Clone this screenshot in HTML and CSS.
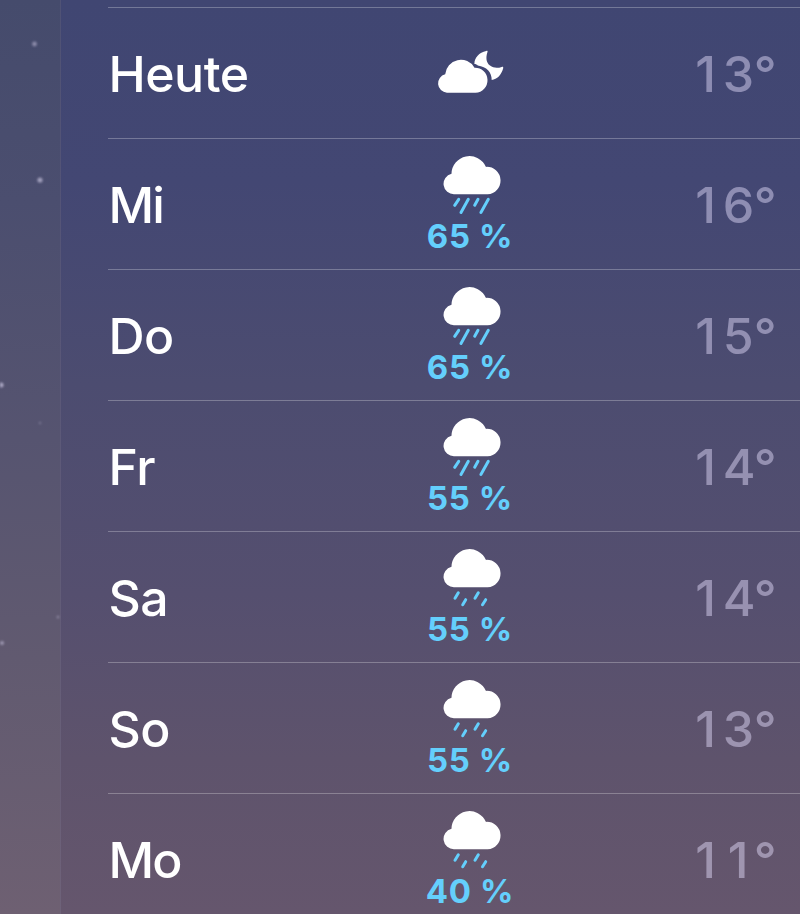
FILE: index.html
```html
<!DOCTYPE html>
<html lang="de">
<head>
    <meta charset="UTF-8">
    <meta name="viewport" content="width=device-width, initial-scale=1.0">
    <title>Wettervorhersage</title>
    <link rel="stylesheet" href="styles.css">
</head>
<body>

    <!-- Symbole, die in mehreren Zeilen vorkommen -->
    <svg class="sprite" aria-hidden="true">
        <symbol id="rain-cloud" viewBox="0 0 64 62">
            <path fill="#fff" d="M15.3 40.3A10.4 10.4 0 0 1 12.5 19.8A18 18 0 0 1 47 12.9A13.7 13.7 0 0 1 48.6 40.3Z"/>
        </symbol>
        <symbol id="heavy-rain" viewBox="0 0 64 62">
            <use href="#rain-cloud"/>
            <path class="drops" d="M19.7 45.3L15.7 51.3M29.3 45.3L22 58.4M39 45.3L35.7 51.3M49.3 45.3L41.9 58.4"/>
        </symbol>
        <symbol id="light-rain" viewBox="0 0 64 62">
            <use href="#rain-cloud"/>
            <path class="drops" d="M19.3 45.7L16 51.3M26.7 52.7L23.7 57.7M39.3 45.7L36 51.3M46.7 52.7L43.5 57.7"/>
        </symbol>
    </svg>

    <div class="sky">
        <svg class="stars" viewBox="0 0 61 914" aria-hidden="true">
            <circle cx="34.5" cy="44" r="2.4" opacity=".55"/>
            <circle cx="40" cy="180" r="2.6" opacity=".7"/>
            <circle cx="1" cy="385" r="2.5" opacity=".8"/>
            <circle cx="40" cy="423" r="1.3" opacity=".3"/>
            <circle cx="58" cy="617" r="1.5" opacity=".4"/>
            <circle cx="2" cy="643" r="2" opacity=".6"/>
        </svg>

        <main class="forecast">
            <div class="day">
                <span class="name">Heute</span>
                <div class="condition">
                    <svg class="night" viewBox="0 0 72 48">
                        <path fill="#fff" d="M12.9 44.7A9.4 9.4 0 0 1 11.2 26.2A15.7 15.7 0 0 1 40.5 19.7A12.5 12.5 0 0 1 41.5 44.7Z"/>
                        <path fill="#fff" d="M52.2 2.9C53.5 2.5 53.9 3.2 53.4 4.2C51.6 9.5 52.2 14.8 56 17.6C59.6 20.3 63.7 20.3 67.7 18.9C68.9 18.5 69.5 19.1 69.2 20.2C67.3 27 63.2 31.3 57.7 31.9C57.8 24.2 52.6 18.6 43.8 17.4C42.8 16.4 41.8 15.9 40.4 15.9C40.4 9.3 45.1 4.5 52.2 2.9Z"/>
                    </svg>
                </div>
                <span class="low"><b>1</b><b>3</b>°</span>
            </div>
            <div class="day">
                <span class="name narrow">Mi</span>
                <div class="condition">
                    <svg class="icon"><use href="#heavy-rain"/></svg>
                    <span class="chance">65 %</span>
                </div>
                <span class="low"><b>1</b><b>6</b>°</span>
            </div>
            <div class="day">
                <span class="name">Do</span>
                <div class="condition">
                    <svg class="icon"><use href="#heavy-rain"/></svg>
                    <span class="chance">65 %</span>
                </div>
                <span class="low"><b>1</b><b>5</b>°</span>
            </div>
            <div class="day">
                <span class="name">Fr</span>
                <div class="condition">
                    <svg class="icon"><use href="#heavy-rain"/></svg>
                    <span class="chance">55 %</span>
                </div>
                <span class="low"><b>1</b><b>4</b>°</span>
            </div>
            <div class="day">
                <span class="name">Sa</span>
                <div class="condition">
                    <svg class="icon"><use href="#light-rain"/></svg>
                    <span class="chance">55 %</span>
                </div>
                <span class="low"><b>1</b><b>4</b>°</span>
            </div>
            <div class="day">
                <span class="name">So</span>
                <div class="condition">
                    <svg class="icon"><use href="#light-rain"/></svg>
                    <span class="chance">55 %</span>
                </div>
                <span class="low"><b>1</b><b>3</b>°</span>
            </div>
            <div class="day">
                <span class="name narrow">Mo</span>
                <div class="condition">
                    <svg class="icon"><use href="#light-rain"/></svg>
                    <span class="chance">40 %</span>
                </div>
                <span class="low"><b>1</b><b>1</b>°</span>
            </div>
        </main>
    </div>

</body>
</html>
```
FILE: styles.css
```css
* {
    box-sizing: border-box;
}

body {
    margin: 0;
    font-family: Inter, "Liberation Sans", sans-serif;
    color: #fff;
}

.sprite {
    display: none;
}

/* Nachthimmel links neben der Karte */
.sky {
    display: flex;
    height: 914px;
    overflow: hidden;
    background: linear-gradient(to bottom, #454b6c 0%, #4b4e6f 22%, #565470 48%, #615a70 72%, #6e6072 100%);
}

.stars {
    flex: none;
    width: 61px;
    height: 914px;
    fill: #c5c0dc;
    filter: blur(0.8px);
}

/* Karte mit den Tagen */
.forecast {
    flex: 1;
    padding: 7px 0 0 47px;
    background: linear-gradient(to bottom, #404672 0%, #434773 20%, #4c4c70 42%, #554f6f 65%, #5e536c 83%, #65566d 100%);
    box-shadow: -1px 0 0 rgba(110, 105, 145, 0.25);
}

.day {
    display: grid;
    grid-template-columns: 262px 200px 1fr;
    align-items: center;
    height: 131px;
    border-top: 1px solid rgba(255, 255, 255, 0.27);
}

.name {
    padding: 1px 0 0 0.5px;
    font-size: 50px;
    font-weight: 500;
    line-height: 60px;
    letter-spacing: -0.5px;
}

.narrow {
    letter-spacing: -2px;
}

.condition {
    display: flex;
    flex-direction: column;
    align-items: center;
    padding-top: 1px;
}

.icon {
    width: 64px;
    height: 62px;
    margin-left: 1px;
}

.night {
    width: 72px;
    height: 48px;
    margin-bottom: 3px;
}

.drops {
    fill: none;
    stroke: #64cffc;
    stroke-width: 3;
    stroke-linecap: round;
}

.chance {
    font-size: 33px;
    font-weight: 700;
    line-height: 40px;
    letter-spacing: 0.6px;
    color: #64cffc;
    white-space: nowrap;
}

.low {
    padding: 2px 23.5px 0 0;
    font-size: 50px;
    font-weight: 500;
    line-height: 60px;
    text-align: right;
    color: rgba(230, 225, 255, 0.46);
}

/* Ziffern gleich breit setzen */
.low b {
    display: inline-block;
    width: 31px;
    font-weight: 500;
    text-align: center;
}

.low b:first-child {
    width: 32px;
    padding-right: 2px;
}
```
